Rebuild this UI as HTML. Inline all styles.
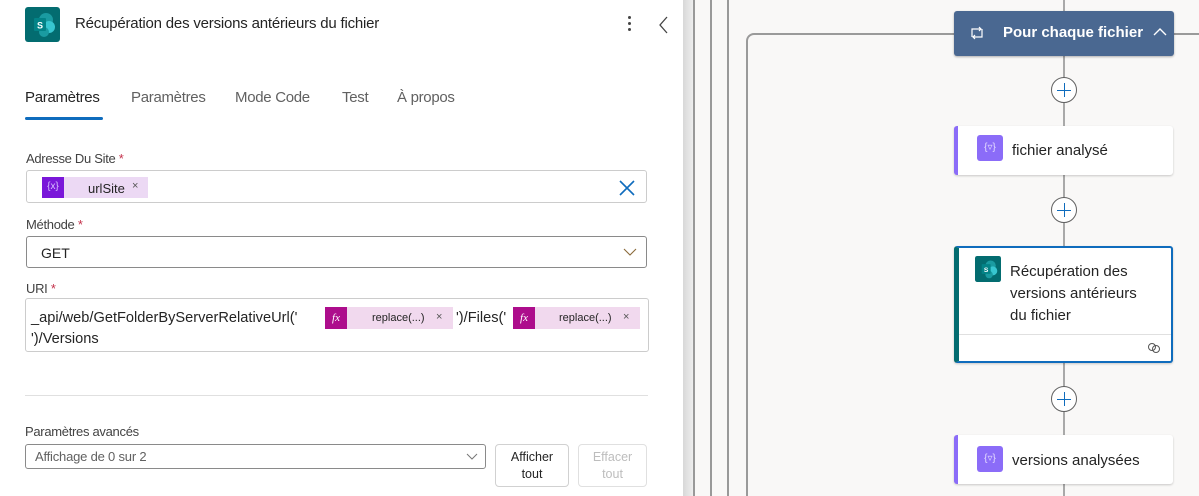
<!DOCTYPE html>
<html><head><meta charset="utf-8"><style>
*{box-sizing:border-box;margin:0;padding:0}
html,body{width:1199px;height:496px;overflow:hidden}
body{position:relative;font-family:"Liberation Sans",sans-serif;background:#f9f8f7;color:#242424}
.a{position:absolute}
#left{left:0;top:0;width:683px;height:496px;background:#fff}
.lbl{font-size:13px;color:#424242;letter-spacing:-.3px}
.lbl b{color:#c4314b;font-weight:normal}
.box{border:1px solid #8a8a8a;border-radius:3px;background:#fff}
.tab{font-size:15px;color:#616161;top:89px;letter-spacing:-.3px}
.plus{width:26px;height:26px;border:1px solid #616161;border-radius:50%;background:#fff;left:1051px}
.plus:before{content:"";position:absolute;left:5px;top:11.5px;width:14px;height:1.6px;background:#0f6cbd}
.plus:after{content:"";position:absolute;left:11.5px;top:5px;width:1.6px;height:14px;background:#0f6cbd}
.vl{width:2px;background:#a9a9a9;left:1063px}
.card{background:#fff;box-shadow:0 1px 2px rgba(0,0,0,.2);border-radius:3px;left:954px;width:219px}
.ic{width:26px;height:26px;border-radius:3px;background:#8b6cf8;color:#e6dcff;font-size:10px;text-align:center;line-height:26px}
.ct{font-size:15px;color:#242424}
.uri{font-size:14.6px;letter-spacing:0}
</style></head><body>
<div class="a" id="left">
 <svg class="a" style="left:25px;top:7px" width="35" height="35" viewBox="0 0 35 35"><rect width="35" height="35" rx="3" fill="#036c70"/><circle cx="21" cy="13" r="7" fill="#1a9ba1"/><circle cx="24" cy="20" r="6" fill="#37c6d0"/><circle cx="19" cy="25" r="5" fill="#1a9ba1"/><rect x="9" y="11" width="12" height="13" rx="1" fill="#038387"/><text x="15" y="21.5" font-size="9" font-weight="bold" fill="#fff" text-anchor="middle" font-family="Liberation Sans">S</text></svg>
 <div class="a" style="left:75px;top:15px;font-size:15px;letter-spacing:-.2px">Récupération des versions antérieurs du fichier</div>
 <div class="a" style="left:628px;top:16px;width:3px;height:3px;background:#444;border-radius:50%;box-shadow:0 6px 0 #444,0 12px 0 #444"></div>
 <svg class="a" style="left:658px;top:16px" width="12" height="18"><path d="M9 1 L2 9 L9 17" stroke="#444" stroke-width="1.3" fill="none"/></svg>
 <div class="a tab" style="left:25px;color:#242424">Paramètres</div>
 <div class="a tab" style="left:131px">Paramètres</div>
 <div class="a tab" style="left:235px">Mode Code</div>
 <div class="a tab" style="left:342px">Test</div>
 <div class="a tab" style="left:397px">À propos</div>
 <div class="a" style="left:25px;top:117px;width:78px;height:3px;background:#0f6cbd;border-radius:2px"></div>
 <div class="a lbl" style="left:26px;top:151px">Adresse Du Site <b>*</b></div>
 <div class="a box" style="left:26px;top:170px;width:621px;height:33px;border-color:#ccc">
  <div class="a" style="left:15px;top:6px;width:106px;height:21px;background:#ecd9f4"><div class="a" style="left:0;top:0;width:22px;height:21px;background:#7a17d9;color:#d8c0ff;font-size:10px;line-height:20px;text-align:center">{x}</div><span class="a" style="left:46px;top:4px;font-size:13px">urlSite</span><span class="a" style="left:90px;top:3px;font-size:11px;color:#555">×</span></div>
  <svg class="a" style="left:592px;top:9px" width="16" height="16"><path d="M1 1L15 15M15 1L1 15" stroke="#0f6cbd" stroke-width="1.6"/></svg>
 </div>
 <div class="a lbl" style="left:26px;top:217px">Méthode <b>*</b></div>
 <div class="a box" style="left:26px;top:236px;width:621px;height:32px">
  <span class="a" style="left:14px;top:8px;font-size:14px">GET</span>
  <svg class="a" style="left:596px;top:11px" width="14" height="9"><path d="M1 1L7 7L13 1" stroke="#8a6a3a" stroke-width="1.1" fill="none"/></svg>
 </div>
 <div class="a lbl" style="left:26px;top:281px">URI <b>*</b></div>
 <div class="a box" style="left:25px;top:298px;width:624px;height:54px;border-color:#ccc">
  <span class="a uri" style="left:5px;top:11px;white-space:nowrap">_api/web/GetFolderByServerRelativeUrl('</span>
  <div class="a" style="left:299px;top:8px;width:128px;height:22px;background:#f1d9ee"><div class="a" style="left:0;top:0;width:22px;height:22px;background:#ad0d8c;color:#fff;font-size:11px;line-height:22px;text-align:center;font-style:italic;font-family:'Liberation Serif',serif">fx</div><span class="a" style="left:47px;top:5px;font-size:11px">replace(...)</span><span class="a" style="left:111px;top:4px;font-size:11px;color:#555">×</span></div>
  <span class="a uri" style="left:430px;top:11px">')/Files('</span>
  <div class="a" style="left:487px;top:8px;width:127px;height:22px;background:#f1d9ee"><div class="a" style="left:0;top:0;width:22px;height:22px;background:#ad0d8c;color:#fff;font-size:11px;line-height:22px;text-align:center;font-style:italic;font-family:'Liberation Serif',serif">fx</div><span class="a" style="left:46px;top:5px;font-size:11px">replace(...)</span><span class="a" style="left:110px;top:4px;font-size:11px;color:#555">×</span></div>
  <span class="a uri" style="left:5px;top:32px">')/Versions</span>
 </div>
 <div class="a" style="left:25px;top:395px;width:623px;height:1px;background:#e0e0e0"></div>
 <div class="a lbl" style="left:25px;top:424px">Paramètres avancés</div>
 <div class="a box" style="left:25px;top:444px;width:461px;height:25px">
  <span class="a" style="left:9px;top:4px;font-size:13px;color:#616161;letter-spacing:-.2px">Affichage de 0 sur 2</span>
  <svg class="a" style="left:440px;top:8px" width="12" height="8"><path d="M1 1L6 6L11 1" stroke="#777" stroke-width="1" fill="none"/></svg>
 </div>
 <div class="a" style="left:495px;top:444px;width:74px;height:43px;border:1px solid #d1d1d1;border-radius:4px;font-size:12.5px;text-align:center;line-height:17px;padding-top:4px">Afficher<br>tout</div>
 <div class="a" style="left:578px;top:444px;width:69px;height:43px;border:1px solid #e0e0e0;border-radius:4px;font-size:12.5px;text-align:center;line-height:17px;padding-top:4px;color:#bdbdbd">Effacer<br>tout</div>
</div>
<div class="a" style="left:683px;top:0;width:11px;height:496px;background:linear-gradient(90deg,#d8d8d8,#f0f0f0)"></div>
<div class="a" style="left:693px;top:0;width:2px;height:496px;background:#999"></div>
<div class="a" style="left:710px;top:0;width:2px;height:496px;background:#999"></div>
<div class="a" style="left:727px;top:0;width:2px;height:496px;background:#999"></div>
<div class="a" style="left:746px;top:33px;width:453px;height:463px;border:2px solid #9a9a9a;border-right:none;border-bottom:none;border-radius:8px 0 0 0"></div>
<div class="vl a" style="top:0;height:496px"></div>
<div class="a" style="left:954px;top:11px;width:220px;height:45px;background:#4a6891;border-radius:3px;box-shadow:0 1px 2px rgba(0,0,0,.3)">
 <svg class="a" style="left:15px;top:15px" width="16" height="14"><path d="M3 11V3H12M10 1L12 3L10 5M13 3V11H4M6 9L4 11L6 13" stroke="#fff" stroke-width="1.2" fill="none"/></svg>
 <span class="a" style="left:49px;top:13px;font-size:15px;font-weight:bold;color:#fff">Pour chaque fichier</span>
 <svg class="a" style="left:199px;top:16px" width="14" height="9"><path d="M1 8L7 2L13 8" stroke="#fff" stroke-width="1.4" fill="none"/></svg>
</div>
<div class="plus a" style="top:77px"></div>
<div class="plus a" style="top:197px"></div>
<div class="plus a" style="top:386px"></div>
<div class="card a" style="top:126px;height:49px;border-left:4px solid #8b6cf8">
 <div class="a ic" style="left:19px;top:9px">{▿}</div><span class="a ct" style="left:54px;top:16px">fichier analysé</span>
</div>
<div class="card a" style="top:246px;height:117px;border:2px solid #0f6cbd;border-left:5px solid #036c70">
 <svg class="a" style="left:16px;top:8px" width="26" height="26" viewBox="0 0 35 35"><rect width="35" height="35" rx="3" fill="#036c70"/><circle cx="21" cy="13" r="7" fill="#1a9ba1"/><circle cx="24" cy="20" r="6" fill="#37c6d0"/><circle cx="19" cy="25" r="5" fill="#1a9ba1"/><rect x="9" y="11" width="12" height="13" rx="1" fill="#038387"/><text x="15" y="21.5" font-size="9" font-weight="bold" fill="#fff" text-anchor="middle">S</text></svg>
 <span class="a ct" style="left:51px;top:13px;line-height:22px">Récupération des<br>versions antérieurs<br>du fichier</span>
 <div class="a" style="left:0;top:86px;width:212px;height:1px;background:#e0e0e0"></div>
 <svg class="a" style="left:188px;top:94px" width="14" height="12"><circle cx="5" cy="5" r="3.5" stroke="#555" fill="none"/><circle cx="9" cy="7" r="3.5" stroke="#555" fill="none"/></svg>
</div>
<div class="card a" style="top:435px;height:49px;border-left:4px solid #8b6cf8">
 <div class="a ic" style="left:19px;top:11px">{▿}</div><span class="a ct" style="left:54px;top:17px">versions analysées</span>
</div>
</body></html>
